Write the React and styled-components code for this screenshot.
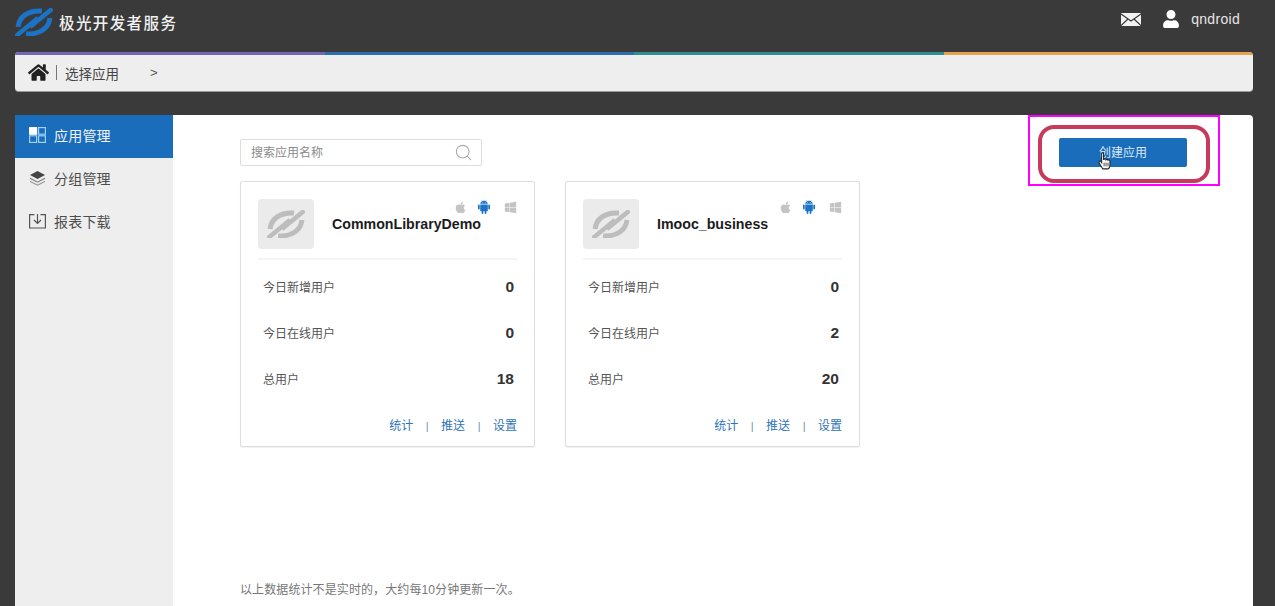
import React from "react";
import styled, { createGlobalStyle } from "styled-components";
import { FaApple, FaWindows, FaHome, FaUser } from "react-icons/fa";
import { AiFillAndroid } from "react-icons/ai";
import { Search as SearchGlyph } from "lucide-react";

const Global = createGlobalStyle`
  html, body { margin: 0; padding: 0; height: 100%; overflow: hidden; }
  body { background: #3a3a3a; font-family: "Liberation Sans", "Noto Sans CJK SC", sans-serif; }
  #root { height: 100%; }
`;

const Page = styled.div`
  height: 606px;
  display: flex;
  flex-direction: column;
  padding: 0 22px 0 15px;
  overflow: hidden;
`;
const Header = styled.header`
  height: 52px;
  flex: none;
  display: flex;
  align-items: center;
  justify-content: space-between;
  color: #fff;
  padding-right: 13px;
`;
const Brand = styled.div`
  display: flex;
  align-items: center;
  gap: 6px;
  margin-top: -8px;
  font-size: 15.5px;
  font-weight: 500;
  letter-spacing: 1.4px;
  color: #f1f1f1;
`;
const Account = styled.div`
  display: flex;
  align-items: center;
  margin-top: -14px;
  font-size: 14px;
  letter-spacing: 0.3px;
  color: #e6e6e6;
`;
const MailIcon = styled.svg`
  width: 20px;
  height: 13px;
  margin-right: 21px;
`;
const UserIcon = styled(FaUser)`
  width: 18px;
  height: 18px;
  margin-right: 11px;
  color: #fff;
`;
const Crumbs = styled.nav`
  position: relative;
  height: 40px;
  flex: none;
  background: #eeeeee;
  border-radius: 4px;
  border-bottom: 1px solid #9a9a9a;
  box-sizing: border-box;
  display: flex;
  align-items: center;
  padding: 2px 0 0 13px;
  overflow: hidden;
  color: #444;
  font-size: 13.5px;
`;
const ColorBar = styled.div`
  position: absolute;
  left: 0;
  right: 0;
  top: 0;
  height: 3px;
  display: grid;
  grid-template-columns: repeat(4, 1fr);
`;
const ColorStop = styled.span`
  background: ${(p) => p.$c};
`;
const HomeIcon = styled(FaHome)`
  width: 21px;
  height: 19px;
  color: #222;
`;
const CrumbLine = styled.span`
  width: 1px;
  height: 15px;
  background: #777;
  margin: 0 8px 0 7px;
`;
const Chevron = styled.span`
  margin-left: 31px;
  font-size: 13px;
  color: #555;
`;
const Panel = styled.section`
  flex: 1;
  margin-top: 23px;
  display: flex;
  background: #fff;
  border-radius: 4px 4px 0 0;
  min-height: 0;
`;
const Side = styled.aside`
  width: 158px;
  flex: none;
  background: #eeeeee;
  border-radius: 4px 0 0 0;
`;
const SideItem = styled.div`
  height: 43px;
  box-sizing: border-box;
  display: flex;
  align-items: center;
  gap: 8px;
  padding: 0 0 4px 14px;
  font-size: 14px;
  letter-spacing: 0.2px;
  background: ${(p) => (p.$active ? "#1a6dbb" : "transparent")};
  color: ${(p) => (p.$active ? "#f2f6fb" : "#4d4d4d")};
`;
const SideIcon = styled.svg`
  width: 17px;
  height: 16px;
  flex: none;
`;
const Main = styled.main`
  flex: 1;
  min-width: 0;
  display: flex;
  flex-direction: column;
  padding: 23px 66px 8px 67px;
`;
const Toolbar = styled.div`
  display: flex;
  align-items: center;
  justify-content: space-between;
  height: 29px;
  margin-bottom: 14px;
`;
const SearchBox = styled.div`
  width: 242px;
  height: 27px;
  box-sizing: border-box;
  border: 1px solid #dcdcdc;
  border-radius: 2px;
  display: flex;
  align-items: center;
  justify-content: space-between;
  padding: 0 8px 0 10px;
  font-size: 12px;
  color: #8a8a8a;
`;
const SearchHint = styled.span`
  margin-top: -2px;
`;
const SearchIcon = styled(SearchGlyph)`
  width: 19px;
  height: 19px;
  color: #a9a9a9;
  stroke-width: 1.4;
`;
const CreateWrap = styled.div`
  position: relative;
`;
const CreateButton = styled.button`
  width: 128px;
  height: 29px;
  display: block;
  box-sizing: border-box;
  border: 0;
  border-radius: 2px;
  background: #1a6dbb;
  color: #dbe9f6;
  font: 12px "Liberation Sans", "Noto Sans CJK SC", sans-serif;
  padding: 0 0 2px;
`;
const Ring = styled.span`
  position: absolute;
  inset: -13px -23px -16px -21px;
  border: 4px solid #c73a5b;
  border-radius: 16px;
`;
const Highlight = styled.span`
  position: absolute;
  inset: -23px -33px -19px -31px;
  border: 2px solid #ff00ff;
`;
const Hand = styled.svg`
  position: absolute;
  left: 38px;
  top: 14px;
  width: 15px;
  height: 18px;
`;
const Cards = styled.div`
  display: flex;
  gap: 30px;
`;
const Card = styled.article`
  width: 295px;
  height: 266px;
  box-sizing: border-box;
  border: 1px solid #dedede;
  border-radius: 2px;
  box-shadow: 0 1px 1px rgba(0, 0, 0, 0.06);
  padding: 17px 17px 0;
`;
const CardHead = styled.div`
  display: flex;
  gap: 18px;
  padding-bottom: 9px;
  border-bottom: 2px solid #f4f4f4;
`;
const LogoTile = styled.div`
  width: 56px;
  height: 50px;
  flex: none;
  border-radius: 4px;
  background: #ebebeb;
  display: flex;
  align-items: center;
  justify-content: center;
`;
const HeadBody = styled.div`
  flex: 1;
  min-width: 0;
`;
const Platforms = styled.div`
  height: 16px;
  display: flex;
  justify-content: flex-end;
  align-items: center;
  gap: 9px;
  margin-bottom: 1px;
`;
const Platform = styled.span`
  display: flex;
  color: ${(p) => (p.$on ? "#1a73c4" : "#c4c4c4")};
  font-size: ${(p) => (p.$on ? "16px" : "13px")};
  margin-right: ${(p) => (p.$on ? "3px" : "0")};
`;
const AppName = styled.div`
  font-size: 14.2px;
  font-weight: 700;
  line-height: 17px;
  color: #1c1c1c;
`;
const Stats = styled.div`
  padding: 3px 3px 0 5px;
`;
const StatRow = styled.div`
  height: 46px;
  display: flex;
  align-items: center;
  justify-content: space-between;
  font-size: 12px;
  color: #555;
`;
const StatValue = styled.span`
  margin-top: 1px;
  font-size: 15.5px;
  font-weight: 700;
  color: #333;
`;
const Links = styled.div`
  margin-top: 17px;
  display: flex;
  justify-content: flex-end;
  align-items: center;
  gap: 12.5px;
  font-size: 12px;
  line-height: 16px;
  color: #2f74b8;
`;
const LinkSep = styled.span`
  color: #6c8fb3;
  font-size: 11px;
`;
const Note = styled.p`
  margin: auto 0 0;
  font-size: 12px;
  letter-spacing: 0.1px;
  line-height: 16px;
  color: #777;
`;

const Mark = ({ size, color }) => (
  <svg width={size} height={size * 0.76} viewBox="0 0 38 29" fill="none" stroke={color} strokeLinecap="butt">
    <path d="M3 19 C4 9 13 2 27 3" strokeWidth="5" />
    <path d="M35 10 C34 20 25 27 11 26" strokeWidth="5" />
    <path d="M0.5 28.5 L23 10" strokeWidth="4.5" />
    <path d="M15 19 L37.5 0.5" strokeWidth="4.5" />
  </svg>
);

const apps = [
  { name: "CommonLibraryDemo", a: 0, b: 0, c: 18 },
  { name: "Imooc_business", a: 0, b: 2, c: 20 },
];

export default function App() {
  return (
    <Page>
      <Global />
      <Header>
        <Brand>
          <Mark size={38} color="#1c72c4" />
          极光开发者服务
        </Brand>
        <Account>
          <MailIcon viewBox="0 0 20 13">
            <rect width="20" height="13" rx="1" fill="#f2f2f2" />
            <path d="M0 1 L10 8 L20 1 M0 12.5 L7 6 M20 12.5 L13 6" stroke="#3a3a3a" strokeWidth="1.2" fill="none" />
          </MailIcon>
          <UserIcon />
          qndroid
        </Account>
      </Header>
      <Crumbs>
        <ColorBar>
          <ColorStop $c="#7566b4" />
          <ColorStop $c="#2c6fb0" />
          <ColorStop $c="#2a9094" />
          <ColorStop $c="#e6a24e" />
        </ColorBar>
        <HomeIcon />
        <CrumbLine />
        选择应用
        <Chevron>&gt;</Chevron>
      </Crumbs>
      <Panel>
        <Side>
          <SideItem $active>
            <SideIcon viewBox="0 0 17 16" fill="none" stroke="#9fd0f5" strokeWidth="1.2">
              <rect x="0.6" y="0.6" width="7" height="6.6" fill="#fff" stroke="#fff" />
              <rect x="9.6" y="0.6" width="6.8" height="6.6" />
              <rect x="0.6" y="8.8" width="7" height="6.6" />
              <rect x="9.6" y="8.8" width="6.8" height="6.6" />
            </SideIcon>
            应用管理
          </SideItem>
          <SideItem>
            <SideIcon viewBox="0 0 17 16">
              <path d="M8.5 1 L16 5 L8.5 9 L1 5 Z" fill="#444" />
              <path d="M1 7.6 L8.5 11.4 L16 7.6 V9 L8.5 12.8 L1 9 Z" fill="#888" />
              <path d="M1 10.8 L8.5 14.4 L16 10.8 V12 L8.5 15.8 L1 12 Z" fill="#999" />
            </SideIcon>
            分组管理
          </SideItem>
          <SideItem>
            <SideIcon viewBox="0 0 17 16" fill="none" stroke="#555" strokeWidth="1.2">
              <path d="M5.5 1.6 H0.6 V15 H16.4 V1.6 H11.5" />
              <path d="M8.5 1 V10.5 M5 7 L8.5 10.5 L12 7" />
            </SideIcon>
            报表下载
          </SideItem>
        </Side>
        <Main>
          <Toolbar>
            <SearchBox>
              <SearchHint>搜索应用名称</SearchHint>
              <SearchIcon />
            </SearchBox>
            <CreateWrap>
              <CreateButton>创建应用</CreateButton>
              <Ring />
              <Highlight />
              <Hand viewBox="0 0 17 22">
                <path
                  d="M5 2 C5 0.6 7.4 0.6 7.4 2 V9 L8 9 C8.4 7.8 10.4 8 10.4 9.4 C11 8.4 12.8 8.8 12.8 10 C13.6 9.4 15.2 10 15.2 11.2 V16 C15.2 18 14 20 13 20.6 H6.4 C5.4 19 3.4 16 2 13.4 C1 11.6 3 10.4 4 11.6 L5 13 Z"
                  fill="#fff"
                  stroke="#222"
                  strokeWidth="1.3"
                />
                <path d="M8 13 V17.5 M10.4 13 V17.5 M12.8 13 V17.5" stroke="#222" strokeWidth="1" />
              </Hand>
            </CreateWrap>
          </Toolbar>
          <Cards>
            {apps.map((app) => (
              <Card key={app.name}>
                <CardHead>
                  <LogoTile>
                    <Mark size={38} color="#bdbdbd" />
                  </LogoTile>
                  <HeadBody>
                    <Platforms>
                      <Platform><FaApple /></Platform>
                      <Platform $on><AiFillAndroid /></Platform>
                      <Platform><FaWindows /></Platform>
                    </Platforms>
                    <AppName>{app.name}</AppName>
                  </HeadBody>
                </CardHead>
                <Stats>
                  <StatRow>今日新增用户<StatValue>{app.a}</StatValue></StatRow>
                  <StatRow>今日在线用户<StatValue>{app.b}</StatValue></StatRow>
                  <StatRow>总用户<StatValue>{app.c}</StatValue></StatRow>
                </Stats>
                <Links>
                  <span>统计</span>
                  <LinkSep>|</LinkSep>
                  <span>推送</span>
                  <LinkSep>|</LinkSep>
                  <span>设置</span>
                </Links>
              </Card>
            ))}
          </Cards>
          <Note>以上数据统计不是实时的，大约每10分钟更新一次。</Note>
        </Main>
      </Panel>
    </Page>
  );
}
